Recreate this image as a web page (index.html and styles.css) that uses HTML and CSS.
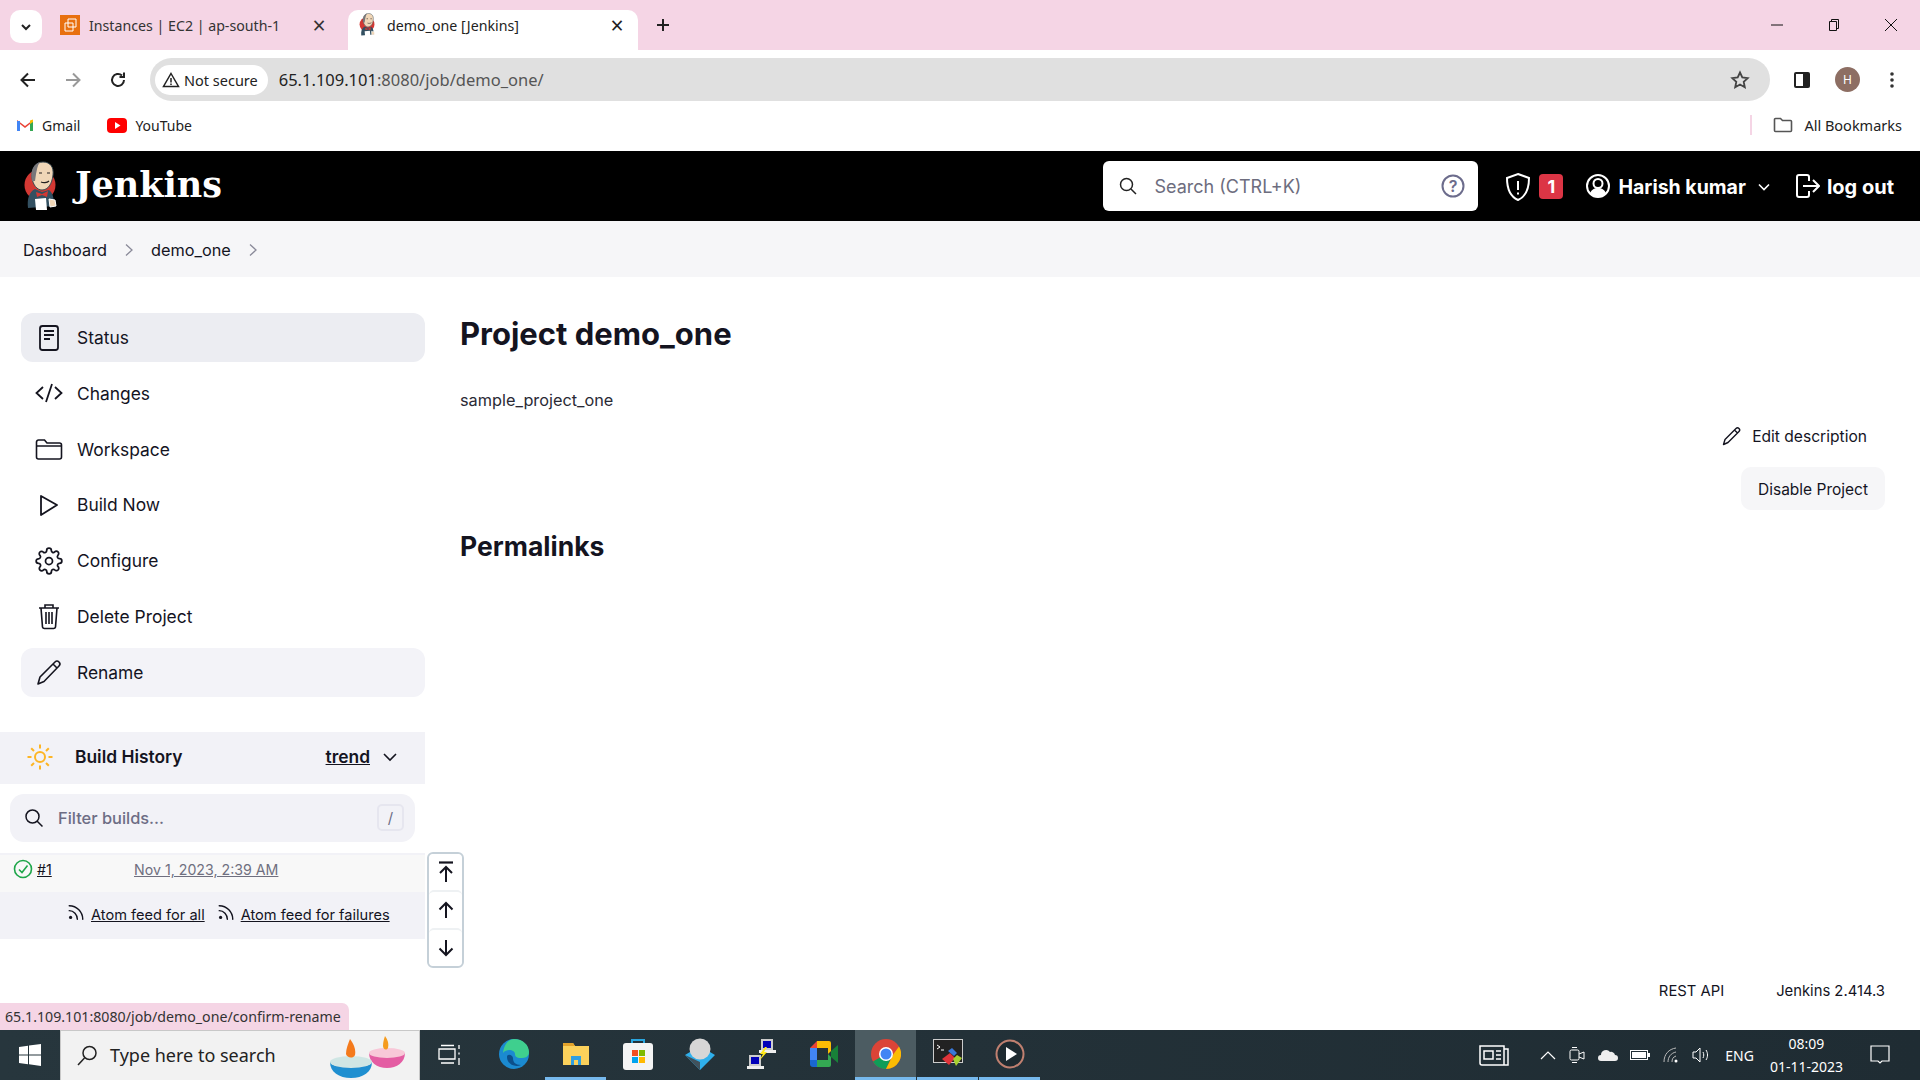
FILE: index.html

```html
<!DOCTYPE html>
<html lang="en">
<head>
  <meta charset="UTF-8" />
  <title>demo_one [Jenkins]</title>
  <link rel="stylesheet" href="styles.css">
</head>
<body>

  <svg class="defs" width="0" height="0">
    <symbol id="butler" viewBox="0 0 38 50">
      <circle cx="17" cy="24" r="15.500" fill="#d33833"/>
      <path d="M5 47c-1-9 1-16 7-19l7 3 7-2c4 3 5 8 5 16z" fill="#335061"/>
      <path d="M9 17C8 7 13 1 20 1c7 0 11 5 10 13-1 9-5 15-11 15-5 0-9-5-10-12z" fill="#f0d6b7" stroke="#3a4a52" stroke-width="1"/>
      <path d="M9 20C7 9 11 3 17 1c-3 4-3 8-4 12l-1 7z" fill="#77767a"/>
      <path d="M13 31l6 2 6-3-1 6-5-2-5 2z" fill="#d33833"/>
      <path d="M12 38l11-1 1 12H13z" fill="#fff"/>
      <path d="M26 38l6 1 1 6-6 1z" fill="#f0d6b7" stroke="#fff"/>
      <path d="M16 12h3M24 12h3M18 21c2 1 6 1 8-1" fill="none" stroke="#231f20" stroke-width="1.2"/>
    </symbol>
    <symbol id="feed" viewBox="0 0 20 20">
      <circle cx="4" cy="16" r="1.8" fill="#14141f"/>
      <path d="M2.5 8.5c5 0 9 4.500 9 9.500M2.500 3c8.500 0 15 7 15 15" fill="none" stroke="#14141f" stroke-width="1.600" stroke-linecap="round"/>
    </symbol>
  </svg>

  <div class="tabstrip">
    <button class="tab-search">
      <svg width="14" height="14" viewBox="0 0 14 14"><path d="M3 5l4 4 4-4" fill="none" stroke="#222" stroke-width="2"/></svg>
    </button>
    <div class="tab">
      <svg class="favicon" width="20" height="20" viewBox="0 0 20 20">
        <rect width="20" height="20" fill="#e8700f"/>
        <path d="M8 4h8v8h-3v4H5V8h3z M8 8h5v4H8z" fill="none" stroke="#fff" stroke-width="1"/>
      </svg>
      <span class="tab-title">Instances | EC2 | ap-south-1</span>
      <span class="tab-close">×</span>
    </div>
    <div class="tab tab-active">
      <svg class="favicon" width="20" height="24"><use href="#butler"/></svg>
      <span class="tab-title">demo_one [Jenkins]</span>
      <span class="tab-close">×</span>
    </div>
    <svg class="new-tab" width="16" height="16" viewBox="0 0 16 16"><path d="M8 2v12M2 8h12" stroke="#222" stroke-width="2"/></svg>
    <div class="window-btns">
      <svg width="14" height="14" viewBox="0 0 14 14"><path d="M1 7h12" stroke="#111"/></svg>
      <svg width="14" height="14" viewBox="0 0 14 14"><path d="M2.500 3.500h7v9h-7zM4.500 3.500v-2h7v9h-2" fill="none" stroke="#111"/></svg>
      <svg width="14" height="14" viewBox="0 0 14 14"><path d="M1 1l12 12M13 1L1 13" stroke="#111"/></svg>
    </div>
  </div>

  <div class="toolbar">
    <svg class="nav-btn" width="20" height="20" viewBox="0 0 20 20"><path d="M17 10H4M10 3.500L3.500 10l6.500 6.500" fill="none" stroke="#222" stroke-width="2"/></svg>
    <svg class="nav-btn" width="20" height="20" viewBox="0 0 20 20"><path d="M3 10h13M10 3.500l6.500 6.500-6.500 6.500" fill="none" stroke="#999" stroke-width="2"/></svg>
    <svg class="nav-btn" width="20" height="20" viewBox="0 0 20 20"><path d="M16 10a6 6 0 1 1-2-4.500M16 2.500v4.500h-4.500" fill="none" stroke="#222" stroke-width="2"/></svg>
    <div class="omnibox">
      <span class="chip">
        <svg width="18" height="18" viewBox="0 0 18 18"><path d="M9 2.500l7.500 13h-15zM9 7v4.500M9 12.500v1.500" fill="none" stroke="#222" stroke-width="1.500"/></svg>
        Not secure
      </span>
      <span class="url">65.1.109.101<span class="url-rest">:8080/job/demo_one/</span></span>
      <svg class="star" width="20" height="20" viewBox="0 0 20 20"><path d="M10 2.500l2.300 5 5.400.6-4 3.700 1.100 5.400L10 14.500 5.200 17.200l1.100-5.400-4-3.700 5.400-.6z" fill="none" stroke="#444" stroke-width="1.800"/></svg>
    </div>
    <svg class="side-panel" width="18" height="18" viewBox="0 0 18 18"><rect x="1" y="1" width="16" height="16" rx="2" fill="#222"/><rect x="3" y="3" width="7" height="12" fill="#fff"/></svg>
    <span class="avatar">H</span>
    <svg class="menu-dots" width="4" height="18" viewBox="0 0 4 18"><circle cx="2" cy="3" r="1.800" fill="#333"/><circle cx="2" cy="9" r="1.800" fill="#333"/><circle cx="2" cy="15" r="1.800" fill="#333"/></svg>
  </div>

  <div class="bookmarks">
    <span class="bookmark">
      <svg width="18" height="14" viewBox="0 0 18 14"><path d="M1 13V2l8 6 8-6v11h-3V6L9 10 4 6v7z" fill="#ea4335"/><path d="M1 13V3h3v10z" fill="#4285f4"/><path d="M14 13V3h3v10z" fill="#34a853"/><path d="M14 2.500l3-1V4l-3 2z" fill="#fbbc04"/></svg>
      Gmail
    </span>
    <span class="bookmark">
      <svg width="20" height="15" viewBox="0 0 20 15"><rect width="20" height="15" rx="4" fill="#f00"/><path d="M8 4l5.500 3.500L8 11z" fill="#fff"/></svg>
      YouTube
    </span>
    <span class="bookmarks-end">
      <svg width="20" height="18" viewBox="0 0 20 18"><path d="M1.500 3.500a1 1 0 0 1 1-1h5l2 2h8a1 1 0 0 1 1 1v9a1 1 0 0 1-1 1h-15a1 1 0 0 1-1-1z" fill="none" stroke="#555" stroke-width="1.600"/></svg>
      All Bookmarks
    </span>
  </div>

  <header class="jenkins-bar">
    <div class="brand">
      <svg width="38" height="50"><use href="#butler"/></svg>
      <span class="brand-name">Jenkins</span>
    </div>
    <div class="search-box">
      <svg width="20" height="20" viewBox="0 0 20 20"><circle cx="8.500" cy="8.500" r="6" fill="none" stroke="#222" stroke-width="1.500"/><path d="M13 13l5 5" stroke="#222" stroke-width="1.500"/></svg>
      <span class="search-text">Search (CTRL+K)</span>
      <svg class="search-help" width="26" height="26" viewBox="0 0 26 26"><circle cx="13" cy="13" r="10.500" fill="none" stroke="#6c6c8c" stroke-width="2"/><text x="13" y="18.500" text-anchor="middle" class="help-mark">?</text></svg>
    </div>
    <svg class="shield" width="28" height="30" viewBox="0 0 28 30"><path d="M14 2l11 4c0 10-2 18-11 22C5 24 3 16 3 6z" fill="none" stroke="#fff" stroke-width="2"/><path d="M14 9v9M14 20.500v2" stroke="#fff" stroke-width="2"/></svg>
    <span class="badge">1</span>
    <svg class="user-icon" width="26" height="26" viewBox="0 0 26 26"><circle cx="13" cy="13" r="11" fill="none" stroke="#fff" stroke-width="2"/><circle cx="13" cy="10.500" r="4.500" fill="none" stroke="#fff" stroke-width="2"/><path d="M5 20c2-4 5-5 8-5s6 1 8 5c-2 3-5 4-8 4s-6-1-8-4z" fill="#fff"/></svg>
    <span class="user-name">Harish kumar</span>
    <svg class="user-caret" width="14" height="14" viewBox="0 0 14 14"><path d="M2 4.500l5 5 5-5" fill="none" stroke="#fff" stroke-width="1.600"/></svg>
    <svg class="logout-icon" width="26" height="26" viewBox="0 0 26 26"><path d="M15 8V4a2 2 0 0 0-2-2H5a2 2 0 0 0-2 2v18a2 2 0 0 0 2 2h8a2 2 0 0 0 2-2v-4M9 13h15M19 7l6 6-6 6" fill="none" stroke="#fff" stroke-width="2"/></svg>
    <span class="logout-text">log out</span>
  </header>

  <nav class="breadcrumbs">
    <span>Dashboard</span>
    <svg width="10" height="14" viewBox="0 0 10 14"><path d="M2 1.500L8 7l-6 5.500" fill="none" stroke="#8a8a99" stroke-width="1.300"/></svg>
    <span>demo_one</span>
    <svg width="10" height="14" viewBox="0 0 10 14"><path d="M2 1.500L8 7l-6 5.500" fill="none" stroke="#8a8a99" stroke-width="1.300"/></svg>
  </nav>

  <div class="page">
    <aside class="sidebar">
      <ul class="side-tasks">
        <li class="task task-current">
          <svg width="28" height="28" viewBox="0 0 28 28"><rect x="5" y="2" width="18" height="24" rx="2.500" fill="none" stroke="#14141f" stroke-width="1.800"/><path d="M9 7h10M9 11h10M9 15h6" stroke="#14141f" stroke-width="1.800"/></svg>
          Status
        </li>
        <li class="task">
          <svg width="28" height="28" viewBox="0 0 28 28"><path d="M8 8l-6.500 6L8 20M20 8l6.500 6L20 20M17 5l-6 18" fill="none" stroke="#14141f" stroke-width="1.800"/></svg>
          Changes
        </li>
        <li class="task">
          <svg width="28" height="28" viewBox="0 0 28 28"><path d="M1.500 7a2 2 0 0 1 2-2h6l2.500 3h12.500a2 2 0 0 1 2 2v12a2 2 0 0 1-2 2h-21a2 2 0 0 1-2-2zM1.500 11h25" fill="none" stroke="#14141f" stroke-width="1.600"/></svg>
          Workspace
        </li>
        <li class="task">
          <svg width="28" height="28" viewBox="0 0 28 28"><path d="M6 5l16 9-16 10z" fill="none" stroke="#14141f" stroke-width="1.800" stroke-linejoin="round"/></svg>
          Build Now
        </li>
        <li class="task">
          <svg width="28" height="28" viewBox="0 0 24 24" fill="none" stroke="#14141f" stroke-width="1.500"><circle cx="12" cy="12" r="3"/><path d="M19.400 15a1.650 1.650 0 0 0 .33 1.820l.06.06a2 2 0 0 1 0 2.830 2 2 0 0 1-2.830 0l-.06-.06a1.650 1.650 0 0 0-1.820-.33 1.650 1.650 0 0 0-1 1.510V21a2 2 0 0 1-2 2 2 2 0 0 1-2-2v-.09A1.650 1.650 0 0 0 9 19.400a1.650 1.650 0 0 0-1.820.33l-.06.06a2 2 0 0 1-2.830 0 2 2 0 0 1 0-2.830l.06-.06a1.650 1.650 0 0 0 .33-1.820 1.650 1.650 0 0 0-1.510-1H3a2 2 0 0 1-2-2 2 2 0 0 1 2-2h.09A1.650 1.650 0 0 0 4.600 9a1.650 1.650 0 0 0-.33-1.820l-.06-.06a2 2 0 0 1 0-2.830 2 2 0 0 1 2.830 0l.06.06a1.650 1.650 0 0 0 1.820.33H9a1.650 1.650 0 0 0 1-1.510V3a2 2 0 0 1 2-2 2 2 0 0 1 2 2v.09a1.650 1.650 0 0 0 1 1.510 1.650 1.650 0 0 0 1.820-.33l.06-.06a2 2 0 0 1 2.830 0 2 2 0 0 1 0 2.830l-.06.06a1.650 1.650 0 0 0-.33 1.820V9a1.650 1.650 0 0 0 1.510 1H21a2 2 0 0 1 2 2 2 2 0 0 1-2 2h-.09a1.650 1.650 0 0 0-1.510 1z"/></svg>
          Configure
        </li>
        <li class="task">
          <svg width="28" height="28" viewBox="0 0 28 28"><path d="M4 6h20M6 6l1.500 19a2 2 0 0 0 2 1.500h9a2 2 0 0 0 2-1.500L22 6M10 6V3h8v3M11 10v12M14 10v12M17 10v12" fill="none" stroke="#14141f" stroke-width="1.600"/></svg>
          Delete Project
        </li>
        <li class="task task-hover">
          <svg width="28" height="28" viewBox="0 0 28 28"><path d="M3 26l2-7L20 4a2.800 2.800 0 0 1 4 4L9 23.500zM18 6l4 4" fill="none" stroke="#14141f" stroke-width="1.600" stroke-linejoin="round"/></svg>
          Rename
        </li>
      </ul>

      <div class="history-head">
        <svg width="28" height="28" viewBox="0 0 28 28"><circle cx="14" cy="14" r="5" fill="none" stroke="#fdb525" stroke-width="2"/><path d="M14 1.500v4M14 22.500v4M1.500 14h4M22.500 14h4M5.200 5.200l2.800 2.800M20 20l2.800 2.800M22.800 5.200L20 8M8 20l-2.800 2.800" stroke="#fdb525" stroke-width="2"/></svg>
        <span class="history-title">Build History</span>
        <span class="trend">trend</span>
        <svg width="16" height="16" viewBox="0 0 16 16"><path d="M2 5l6 6 6-6" fill="none" stroke="#14141f" stroke-width="1.600"/></svg>
      </div>

      <div class="filter-box">
        <svg width="20" height="20" viewBox="0 0 20 20"><circle cx="8.500" cy="8.500" r="6.500" fill="none" stroke="#14141f" stroke-width="1.500"/><path d="M13 13l5.500 5.500" stroke="#14141f" stroke-width="1.500"/></svg>
        <span class="filter-text">Filter builds...</span>
        <span class="filter-key">/</span>
      </div>

      <div class="build-row">
        <svg width="20" height="20" viewBox="0 0 20 20"><circle cx="10" cy="10" r="8.500" fill="none" stroke="#1ea64a" stroke-width="1.600"/><path d="M6 10.500l3 3 5.500-7" fill="none" stroke="#1ea64a" stroke-width="1.600"/></svg>
        <a class="build-num">#1</a>
        <a class="build-date">Nov 1, 2023, 2:39 AM</a>
      </div>
      <div class="feed-row">
        <svg width="18" height="18"><use href="#feed"/></svg>
        <a class="feed-link">Atom feed for all</a>
        <svg class="feed-second" width="18" height="18"><use href="#feed"/></svg>
        <a class="feed-link">Atom feed for failures</a>
      </div>

      <div class="scroll-btns">
        <button class="scroll-btn">
          <svg width="20" height="24" viewBox="0 0 20 24"><path d="M3 2.500h14" stroke="#14141f" stroke-width="2.200"/><path d="M10 22V8M4 13l6-6 6 6" fill="none" stroke="#14141f" stroke-width="2"/></svg>
        </button>
        <button class="scroll-btn">
          <svg width="20" height="20" viewBox="0 0 20 20"><path d="M10 18V3M3.500 9.500L10 3l6.500 6.500" fill="none" stroke="#14141f" stroke-width="2"/></svg>
        </button>
        <button class="scroll-btn">
          <svg width="20" height="20" viewBox="0 0 20 20"><path d="M10 2v15M3.500 10.500L10 17l6.500-6.500" fill="none" stroke="#14141f" stroke-width="2"/></svg>
        </button>
      </div>
    </aside>

    <main class="content">
      <h1 class="project-title">Project demo_one</h1>
      <p class="project-desc">sample_project_one</p>
      <div class="project-actions">
        <span class="edit-desc">
          <svg width="20" height="20" viewBox="0 0 20 20"><path d="M1.500 18.500l1.500-5L14 2.500a2 2 0 0 1 3 3L6 16.500zM12.500 4l3 3" fill="none" stroke="#14141f" stroke-width="1.400" stroke-linejoin="round"/></svg>
          Edit description
        </span>
        <button class="disable-btn">Disable Project</button>
      </div>
      <h2 class="section-title">Permalinks</h2>
      <footer class="page-footer">
        <span>REST API</span>
        <span>Jenkins 2.414.3</span>
      </footer>
    </main>
    <div class="status-bubble">65.1.109.101:8080/job/demo_one/confirm-rename</div>
  </div>

  <div class="taskbar">
    <svg class="start" width="22" height="22" viewBox="0 0 22 22"><path d="M0 3l9-1.300V10.500H0zM10 1.500L22 0v10.500H10zM0 11.500h9v8.800L0 19zM10 11.500h12V22l-12-1.700z" fill="#fff"/></svg>
    <div class="task-search">
      <svg width="24" height="24" viewBox="0 0 24 24"><circle cx="14.500" cy="9" r="6.500" fill="none" stroke="#222" stroke-width="1.500"/><path d="M9.500 14L3 21" stroke="#222" stroke-width="1.500"/></svg>
      <span class="task-search-text">Type here to search</span>
      <svg class="diyas" width="78" height="44" viewBox="0 0 78 44">
        <path d="M40 19h36c0 9-8 15-18 15s-18-6-18-15z" fill="#e45da3"/>
        <ellipse cx="58" cy="19" rx="18" ry="5" fill="#f8c8d8"/>
        <path d="M56 2c3 4 4 8 3 12-2 3-5 1-5-2 0-4 1-7 2-10z" fill="#f59b1e"/>
        <path d="M1 28h42c0 10-9 16-21 16S1 38 1 28z" fill="#1f8fd0"/>
        <ellipse cx="22" cy="28" rx="21" ry="6" fill="#cfe6e4"/>
        <path d="M21 5c4 5 6 11 5 16-2 4-8 3-9-1 0-5 2-10 4-15z" fill="#f47a1c"/>
      </svg>
    </div>
    <svg class="task-view" width="24" height="24" viewBox="0 0 24 24"><path d="M1 6h16v10H1zM3 2.500h13M3 20h13M21 2v4M21 9.500v2M21 15v7" fill="none" stroke="#fff" stroke-width="1.300"/></svg>
    <div class="task-apps">
      <span class="app">
        <svg width="30" height="30" viewBox="0 0 30 30"><circle cx="15" cy="15" r="15" fill="#1b8ad0"/><path d="M15 0c9 0 15 6 15 13 0 5-4 6-8 6-5 0-6-2-6-4 0-4-8-6-12-1C5 6 9 0 15 0z" fill="#3fcf8e"/><path d="M8 18c0 7 8 11 14 8-6 0-8-3-8-7 0-3-6-5-6-1z" fill="#0c4f8a"/></svg>
      </span>
      <span class="app app-open">
        <svg width="28" height="26" viewBox="0 0 28 26"><path d="M1 2h10l2 3h14v19H1z" fill="#fbd15b"/><path d="M1 2h10l2 3H1z" fill="#e3a32b"/><path d="M9 24v-9h10v9h-3v-5h-4v5z" fill="#2f9fe0"/></svg>
      </span>
      <span class="app">
        <svg width="30" height="32" viewBox="0 0 30 32"><path d="M9 6V2h12v4" fill="none" stroke="#2aa6df" stroke-width="2"/><rect y="5" width="30" height="27" rx="3" fill="#f4f4f4"/><rect x="9" y="12" width="6" height="6" fill="#f25022"/><rect x="16" y="12" width="6" height="6" fill="#7fba00"/><rect x="9" y="19" width="6" height="6" fill="#00a4ef"/><rect x="16" y="19" width="6" height="6" fill="#ffb900"/></svg>
      </span>
      <span class="app">
        <svg width="30" height="32" viewBox="0 0 30 32"><path d="M0 17l15 15 15-15-5-3-10 6-10-6z" fill="#2fb0ec"/><path d="M0 17l15 15v-8z" fill="#41525c"/><circle cx="15" cy="11" r="10.500" fill="#d6d6d6"/></svg>
      </span>
      <span class="app">
        <svg width="30" height="32" viewBox="0 0 30 32"><rect x="14" y="1" width="12" height="11" fill="#ccc"/><rect x="16" y="3" width="8" height="7" fill="#0000b8"/><rect x="12" y="12" width="17" height="3" fill="#eee"/><rect x="2" y="17" width="12" height="11" fill="#ccc"/><rect x="4" y="19" width="8" height="7" fill="#0000b8"/><rect x="0" y="28" width="17" height="3" fill="#eee"/><path d="M18 9l-5 7h3l-4 7 8-9h-3l3-5z" fill="#ffe81a"/></svg>
      </span>
      <span class="app">
        <svg width="28" height="26" viewBox="0 0 28 26"><path d="M7 0h11v7H7z" fill="#fbbc04"/><path d="M0 7l7-7v7z" fill="#ea4335"/><path d="M0 7h7v12H0z" fill="#4285f4"/><path d="M0 19h7v7H3a3 3 0 0 1-3-3z" fill="#1967d2"/><path d="M7 19h11v7H7z" fill="#34a853"/><path d="M18 0h1a2 2 0 0 1 2 2v8l-3 3z" fill="#fbbc04"/><path d="M18 13l3 3v8a2 2 0 0 1-2 2h-1z" fill="#34a853"/><path d="M21 10l7-6v18l-7-6z" fill="#188038"/></svg>
      </span>
      <span class="app app-open app-active">
        <svg width="30" height="30" viewBox="0 0 30 30"><circle cx="15" cy="15" r="15" fill="#db4437"/><path d="M15 15L2 22.500A15 15 0 0 0 15 30l7-15z" fill="#0f9d58"/><path d="M28 7.500A15 15 0 0 1 15 30l7.500-15z" fill="#fbbc04"/><circle cx="15" cy="15" r="7" fill="#fff"/><circle cx="15" cy="15" r="5.500" fill="#4285f4"/></svg>
      </span>
      <span class="app app-open">
        <svg width="30" height="30" viewBox="0 0 30 30"><rect x=".5" y=".5" width="29" height="23" fill="#222" stroke="#ccc"/><path d="M4 6l3 2-3 2M8 11h3" fill="none" stroke="#fff"/><path d="M9 20l8-6 5 5-6 7z" fill="#e0343a"/><path d="M15 12l4-3 5 5-3 3z" fill="#3a78d8"/><path d="M20 20l4-4 5 3-6 8z" fill="#a8d030"/></svg>
      </span>
      <span class="app app-open">
        <svg width="30" height="30" viewBox="0 0 30 30"><circle cx="15" cy="15" r="13.500" fill="#1e2a30" stroke="#c08070" stroke-width="2"/><path d="M11 8l11 7-11 7z" fill="#fff"/></svg>
      </span>
    </div>
    <div class="tray">
      <svg class="tray-news" width="30" height="22" viewBox="0 0 30 22"><path d="M1 2h24v19H3a2 2 0 0 1-2-2zM25 5h4v16h-4M5 7h9v8H5zM17 7h5M17 11h5M17 15h5" fill="none" stroke="#fff" stroke-width="1.500"/></svg>
      <svg class="tray-caret" width="16" height="10" viewBox="0 0 16 10"><path d="M1 9l7-7 7 7" fill="none" stroke="#fff" stroke-width="1.200"/></svg>
      <svg width="16" height="18" viewBox="0 0 16 18"><rect x="1" y="4" width="9" height="10" rx="1.500" fill="none" stroke="#fff"/><path d="M10 8l5-2v7l-5-2M3 1.500h5M3 16.500h5" fill="none" stroke="#fff"/></svg>
      <svg width="20" height="12" viewBox="0 0 20 12"><path d="M3 12a3 3 0 0 1 0-6 5 5 0 0 1 9-3 4 4 0 0 1 5 3 3 3 0 0 1 0 6z" fill="#eee"/></svg>
      <svg class="tray-battery" width="20" height="12" viewBox="0 0 20 12"><rect x=".5" y="1.500" width="17" height="9" fill="none" stroke="#fff"/><rect x="2" y="3" width="14" height="6" fill="#fff"/><rect x="18" y="4" width="2" height="4" fill="#fff"/></svg>
      <svg width="16" height="16" viewBox="0 0 16 16"><path d="M1 15c0-8 5-13 12-14M5 15c0-5 3-9 8-10M9 15c0-3 1-5 4-6" fill="none" stroke="#bbb"/><circle cx="13" cy="14" r="1.500" fill="#fff"/></svg>
      <svg width="20" height="16" viewBox="0 0 20 16"><path d="M1 5h3l4-4v14l-4-4H1zM11 5c1 2 1 4 0 6M14 3c2 3 2 7 0 10" fill="none" stroke="#fff"/></svg>
      <span class="tray-lang">ENG</span>
      <div class="tray-clock">
        <span>08:09</span>
        <span>01-11-2023</span>
      </div>
      <svg class="tray-notify" width="20" height="20" viewBox="0 0 20 20"><path d="M1 1h18v15h-7l-2 2-2-2H1z" fill="none" stroke="#fff" stroke-width="1.200"/></svg>
    </div>
  </div>

</body>
</html>
```

FILE: styles.css

```css
* {
  box-sizing: border-box;
}

html, body {
  margin: 0;
  height: 100%;
}

body {
  display: flex;
  flex-direction: column;
  width: 1920px;
  height: 1080px;
  overflow: hidden;
  font-family: Inter, "Noto Sans", sans-serif;
  color: #14141f;
  background: #fff;
}

.defs {
  position: absolute;
}

button {
  font: inherit;
  border: none;
  padding: 0;
  color: inherit;
}

ul {
  list-style: none;
  margin: 0;
  padding: 0;
}

a {
  text-decoration: underline;
}

/* browser chrome */
.tabstrip {
  display: flex;
  align-items: flex-end;
  height: 50px;
  flex: none;
  padding-left: 10px;
  background: #f5d5e5;
  font-family: "Noto Sans", sans-serif;
}

.tab-search {
  display: flex;
  align-items: center;
  justify-content: center;
  width: 32px;
  height: 33px;
  margin-bottom: 7px;
  border-radius: 10px;
  background: #fff;
}

.tab {
  display: flex;
  align-items: center;
  width: 290px;
  height: 40px;
  padding: 0 11px 10px 18px;
  margin-right: 16px;
  font-size: 14.200px;
  color: #333;
}

.tab:nth-child(2) {
  width: 298px;
  margin-right: 8px;
}

.tab-title {
  flex: 1;
  margin-left: 9px;
  white-space: nowrap;
}

.tab-close {
  width: 20px;
  font-size: 23px;
  line-height: 20px;
  text-align: center;
}

.tab-active {
  background: #fff;
  border-radius: 10px 10px 0 0;
  padding-left: 10px;
  color: #222;
}

.new-tab {
  align-self: center;
  margin: 0 0 0 1px;
}

.window-btns {
  display: flex;
  align-self: center;
  gap: 43px;
  margin-left: auto;
  padding-right: 22px;
}

.toolbar {
  display: flex;
  align-items: center;
  flex: none;
  height: 51px;
  padding: 8px 0 0 18px;
  background: #fff;
  border-radius: 10px 10px 0 0;
}

.nav-btn {
  margin-right: 25px;
}

.nav-btn:nth-child(3) {
  margin-right: 22px;
}

.omnibox {
  display: flex;
  align-items: center;
  width: 1620px;
  height: 43px;
  padding: 0 20px 0 5px;
  border-radius: 22px;
  background: #e0e0e0;
}

.chip {
  display: flex;
  align-items: center;
  gap: 4px;
  height: 30px;
  padding: 0 10px 0 7px;
  border-radius: 15px;
  background: #fff;
  font-family: "Noto Sans", sans-serif;
  font-size: 14.500px;
  color: #222;
}

.url {
  margin-left: 11px;
  font-family: "Noto Sans", sans-serif;
  font-size: 16.500px;
  color: #222;
}

.url-rest {
  color: #555;
}

.star {
  margin-left: auto;
}

.side-panel {
  margin-left: 23px;
}

.avatar {
  display: flex;
  align-items: center;
  justify-content: center;
  width: 25px;
  height: 25px;
  margin-left: 24px;
  border-radius: 50%;
  background: #8d6e63;
  color: #fff;
  font-family: "Noto Sans", sans-serif;
  font-size: 12px;
}

.menu-dots {
  margin-left: 30px;
}

.bookmarks {
  display: flex;
  align-items: center;
  flex: none;
  height: 50px;
  padding: 0 18px 2px 16px;
  background: #fff;
  font-family: "Noto Sans", sans-serif;
  font-size: 14px;
  color: #222;
}

.bookmark {
  display: flex;
  align-items: center;
  gap: 8px;
  margin-right: 27px;
}

.bookmarks-end {
  display: flex;
  align-items: center;
  gap: 11px;
  height: 20px;
  margin-left: auto;
  padding-left: 21px;
  border-left: 2px solid #f5d5e5;
  font-size: 14.500px;
}

/* jenkins header */
.jenkins-bar {
  display: flex;
  align-items: center;
  flex: none;
  height: 70px;
  padding: 0 26px 0 23px;
  background: #000;
  color: #fff;
}

.brand {
  display: flex;
  align-items: center;
  gap: 14px;
  margin-right: auto;
}

.brand-name {
  margin-top: -4px;
  font-family: "DejaVu Serif", serif;
  font-size: 35px;
  font-weight: 700;
}

.search-box {
  display: flex;
  align-items: center;
  width: 375px;
  height: 50px;
  padding: 0 12px 0 15px;
  border-radius: 6px;
  background: #fff;
}

.search-text {
  flex: 1;
  margin-left: 16px;
  font-size: 18px;
  color: #6d6d7e;
}

.help-mark {
  font-family: Inter, sans-serif;
  font-size: 16px;
  font-weight: 600;
  fill: #6c6c8c;
}

.shield {
  margin-left: 26px;
  margin-top: 2px;
}

.badge {
  display: flex;
  align-items: center;
  justify-content: center;
  width: 24px;
  height: 25px;
  margin: 0 0 0 7px;
  border-radius: 4px;
  background: #dc3545;
  font-size: 18px;
  font-weight: 700;
}

.user-icon {
  margin: 0 0 0 22px;
}

.user-name,
.logout-text {
  font-weight: 700;
  margin-top: 2px;
}

.user-name {
  margin-left: 7px;
  font-size: 19.500px;
}

.user-caret {
  margin: 2px 0 0 11px;
}

.logout-icon {
  margin: 0 0 0 23px;
}

.logout-text {
  margin-left: 7px;
  font-size: 20px;
}

.breadcrumbs {
  display: flex;
  align-items: center;
  flex: none;
  gap: 17px;
  height: 56px;
  padding: 1px 0 0 23px;
  background: #f6f6f8;
  font-size: 16.300px;
}

/* page */
.page {
  display: flex;
  flex: 1;
  position: relative;
  min-height: 0;
}

.sidebar {
  position: relative;
  flex: none;
  width: 460px;
  padding: 36px 35px 0 0;
}

.side-tasks {
  display: flex;
  flex-direction: column;
  gap: 6.800px;
  padding-left: 21px;
}

.task {
  display: flex;
  align-items: center;
  gap: 14px;
  height: 49px;
  padding-left: 14px;
  border-radius: 12px;
  font-size: 17.400px;
}

.task-current {
  background: #ecedf2;
}

.task-hover {
  background: #f3f3f8;
}

.history-head {
  display: flex;
  align-items: center;
  height: 52px;
  margin-top: 35px;
  padding: 0 27px 2px 26px;
  background: #f2f2f7;
  font-size: 17.400px;
  font-weight: 600;
}

.history-title {
  flex: 1;
  margin-left: 21px;
}

.trend {
  margin-right: 12px;
  text-decoration: underline;
}

.filter-box {
  display: flex;
  align-items: center;
  height: 48px;
  margin: 10px 10px 11px 10px;
  padding: 0 11px 0 14px;
  border-radius: 14px;
  background: #f2f2f7;
}

.filter-text {
  flex: 1;
  margin-left: 14px;
  font-size: 16.400px;
  font-weight: 500;
  color: #6d6d85;
}

.filter-key {
  display: flex;
  align-items: center;
  justify-content: center;
  width: 27px;
  height: 27px;
  border: 2px solid #e6e6ef;
  border-radius: 5px;
  font-size: 15px;
  color: #6d6d85;
}

.build-row {
  display: flex;
  align-items: center;
  height: 39px;
  padding: 0 0 8px 13px;
  border-top: 2px solid #f2f2f7;
  background: #f8f8f8;
  font-size: 14.200px;
}

.build-num {
  margin-left: 4px;
  width: 97px;
}

.build-date {
  color: #6f6f7f;
}

.feed-row {
  display: flex;
  align-items: center;
  height: 47px;
  padding: 0 0 1px 67px;
  background: #f2f2f7;
  font-size: 14.600px;
}

.feed-row svg {
  margin-top: -5px;
  margin-right: 6px;
}

.feed-second {
  margin-left: 12px;
}

.feed-link {
  white-space: nowrap;
}

.scroll-btns {
  position: absolute;
  left: 427px;
  top: 575px;
  display: flex;
  flex-direction: column;
  width: 37px;
  height: 116px;
  border: 2px solid #c5d0d8;
  border-radius: 6px;
  background: #fff;
}

.scroll-btn {
  display: flex;
  align-items: center;
  justify-content: center;
  flex: 1;
  background: #fff;
  border-radius: 5px;
}

.scroll-btn + .scroll-btn {
  border-top: 2px solid #eef1f3;
}

.content {
  position: relative;
  display: flex;
  flex-direction: column;
  flex: 1;
  padding: 37px 35px 29px 0;
}

.project-title {
  margin: 0;
  font-size: 31px;
  font-weight: 700;
  line-height: 40px;
}

.project-desc {
  margin: 34px 0 0;
  font-size: 16.300px;
  font-weight: 400;
  line-height: 24px;
  color: #2a2a35;
}

.project-actions {
  display: flex;
  flex-direction: column;
  align-items: flex-end;
  margin-top: 12px;
}

.edit-desc {
  display: flex;
  align-items: center;
  gap: 10px;
  height: 24px;
  margin-right: 18px;
  font-size: 15.600px;
}

.disable-btn {
  height: 43px;
  margin-top: 19px;
  padding: 1px 17px 0;
  border-radius: 10px;
  background: #f6f6f8;
  font-size: 15.500px;
}

.section-title {
  margin: 20px 0 0;
  font-size: 26.500px;
  font-weight: 700;
  line-height: 32px;
}

.page-footer {
  display: flex;
  justify-content: flex-end;
  gap: 52px;
  margin-top: auto;
  font-size: 14.800px;
  line-height: 20px;
}

.status-bubble {
  position: absolute;
  left: 0;
  bottom: 0;
  height: 27px;
  padding: 0 8px 0 5px;
  border-radius: 0 7px 0 0;
  background: #f5d5e5;
  color: #333;
  font-family: "Noto Sans", sans-serif;
  font-size: 14.200px;
  line-height: 28px;
}

/* windows taskbar */
.taskbar {
  display: flex;
  align-items: center;
  flex: none;
  height: 50px;
  background: linear-gradient(90deg, #27363d, #1f2c33);
  color: #fff;
  font-family: "Noto Sans", sans-serif;
}

.start {
  flex: none;
  margin: 0 19px;
}

.task-search {
  display: flex;
  align-items: center;
  flex: none;
  width: 360px;
  height: 50px;
  padding-left: 14px;
  background: #f2f2f2;
  border: 1px solid #c8c8c8;
  border-bottom: none;
  color: #222;
}

.task-search-text {
  flex: 1;
  margin: -2px 0 0 11px;
  font-size: 18px;
}

.diyas {
  margin-right: 12px;
  align-self: flex-end;
  margin-bottom: 2px;
}

.task-view {
  flex: none;
  margin-left: 18px;
}

.task-apps {
  display: flex;
  margin-left: 21px;
}

.app {
  display: flex;
  align-items: center;
  justify-content: center;
  width: 61px;
  height: 50px;
  margin-right: 1px;
  border-bottom: 3px solid transparent;
}

.app-open {
  border-bottom-color: #76b9ed;
}

.app-active {
  background: #4c5c62;
}

.tray {
  display: flex;
  align-items: center;
  flex: 1;
  gap: 13px;
  padding-right: 30px;
  justify-content: flex-end;
}

.tray-news {
  margin-right: 18px;
}

.tray-battery {
  margin-left: -1px;
}

.tray-lang {
  font-size: 14px;
  margin: 0 3px 0 0;
}

.tray-clock {
  display: flex;
  flex-direction: column;
  align-items: center;
  font-size: 14px;
  line-height: 23px;
  margin-right: 14px;
}

.tray-notify {
  flex: none;
}
```
